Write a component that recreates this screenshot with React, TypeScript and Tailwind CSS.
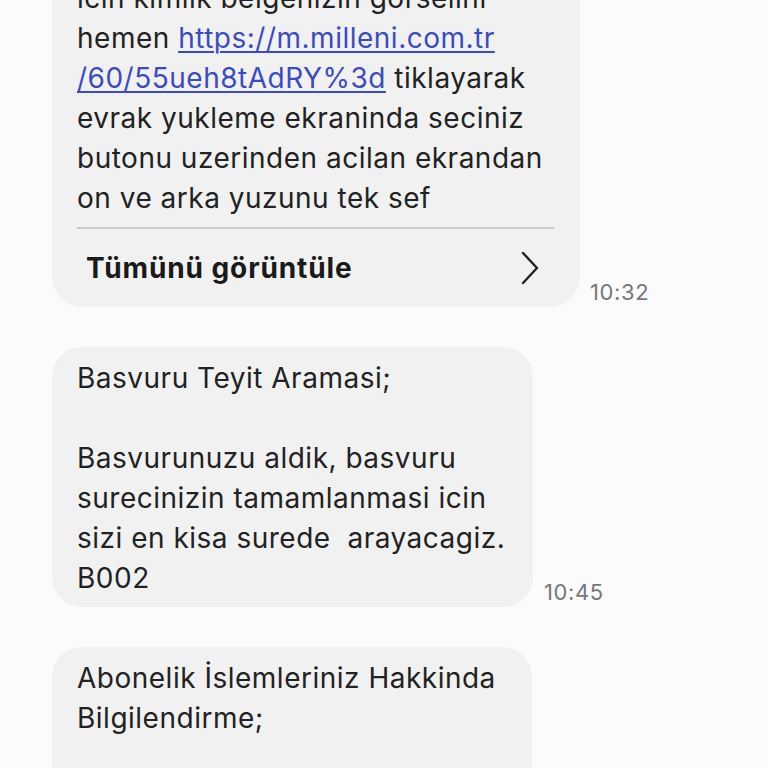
import React from "react";

const font = { fontFamily: "Inter, Roboto, 'Noto Sans', sans-serif" };

export default function App() {
  return (
    <div className="w-[768px] h-[768px] overflow-hidden bg-[#fbfbfd]" style={font}>
      <div className="flex flex-col gap-[40px] pl-[52px] -mt-[33px]">
        {/* Bubble 1 */}
        <div className="flex items-end gap-[10px]">
          <div className="w-[528px] bg-[#f1f1f1] rounded-[30px] pl-[25px] pr-[26px] pt-[11px]">
            <div className="text-[28px] leading-[40px] text-[#222] tracking-[0.5px]">
              <div>icin kimlik belgenizin görselini</div>
              <div>
                hemen{" "}
                <span className="text-[#3b4bc4] underline decoration-[2px] underline-offset-[3px]">https://m.milleni.com.tr</span>
              </div>
              <div>
                <span className="text-[#3b4bc4] underline decoration-[2px] underline-offset-[3px]">/60/55ueh8tAdRY%3d</span> tiklayarak
              </div>
              <div>evrak yukleme ekraninda seciniz</div>
              <div>butonu uzerinden acilan ekrandan</div>
              <div>on ve arka yuzunu tek sef</div>
            </div>
            <div className="mt-[9px] h-[2px] bg-[#c9c9c9]" />
            <div className="h-[78px] flex items-center justify-between pl-[9px] pr-[14px]">
              <span className="text-[28px] font-bold text-[#1a1a1a] tracking-[0.9px]">Tümünü görüntüle</span>
              <svg width="20" height="34" viewBox="0 0 20 34" fill="none">
                <path d="M3 2 L17 17 L3 32" stroke="#222" strokeWidth="2.4" strokeLinecap="round" strokeLinejoin="round" />
              </svg>
            </div>
          </div>
          <div className="text-[22px] leading-[24px] text-[#777] pb-[3px] tracking-[0.6px]">10:32</div>
        </div>

        {/* Bubble 2 */}
        <div className="flex items-end gap-[11px]">
          <div className="w-[481px] bg-[#f1f1f1] rounded-[30px] pl-[25px] pr-[20px] pt-[11px] pb-[9px]">
            <div className="text-[28px] leading-[40px] text-[#222] tracking-[0.5px]">
              <div>Basvuru Teyit Aramasi;</div>
              <div>&nbsp;</div>
              <div>Basvurunuzu aldik, basvuru</div>
              <div>surecinizin tamamlanmasi icin</div>
              <div className="whitespace-pre">sizi en kisa surede  arayacagiz.</div>
              <div>B002</div>
            </div>
          </div>
          <div className="text-[22px] leading-[24px] text-[#777] pb-[3px] tracking-[0.6px]">10:45</div>
        </div>

        {/* Bubble 3 */}
        <div className="flex items-end">
          <div className="w-[480px] bg-[#f1f1f1] rounded-[30px] pl-[25px] pr-[20px] pt-[11px] pb-[9px]">
            <div className="text-[28px] leading-[40px] text-[#222] tracking-[0.5px]">
              <div>Abonelik İslemleriniz Hakkinda</div>
              <div>Bilgilendirme;</div>
              <div>&nbsp;</div>
              <div>&nbsp;</div>
            </div>
          </div>
        </div>
      </div>
    </div>
  );
}
